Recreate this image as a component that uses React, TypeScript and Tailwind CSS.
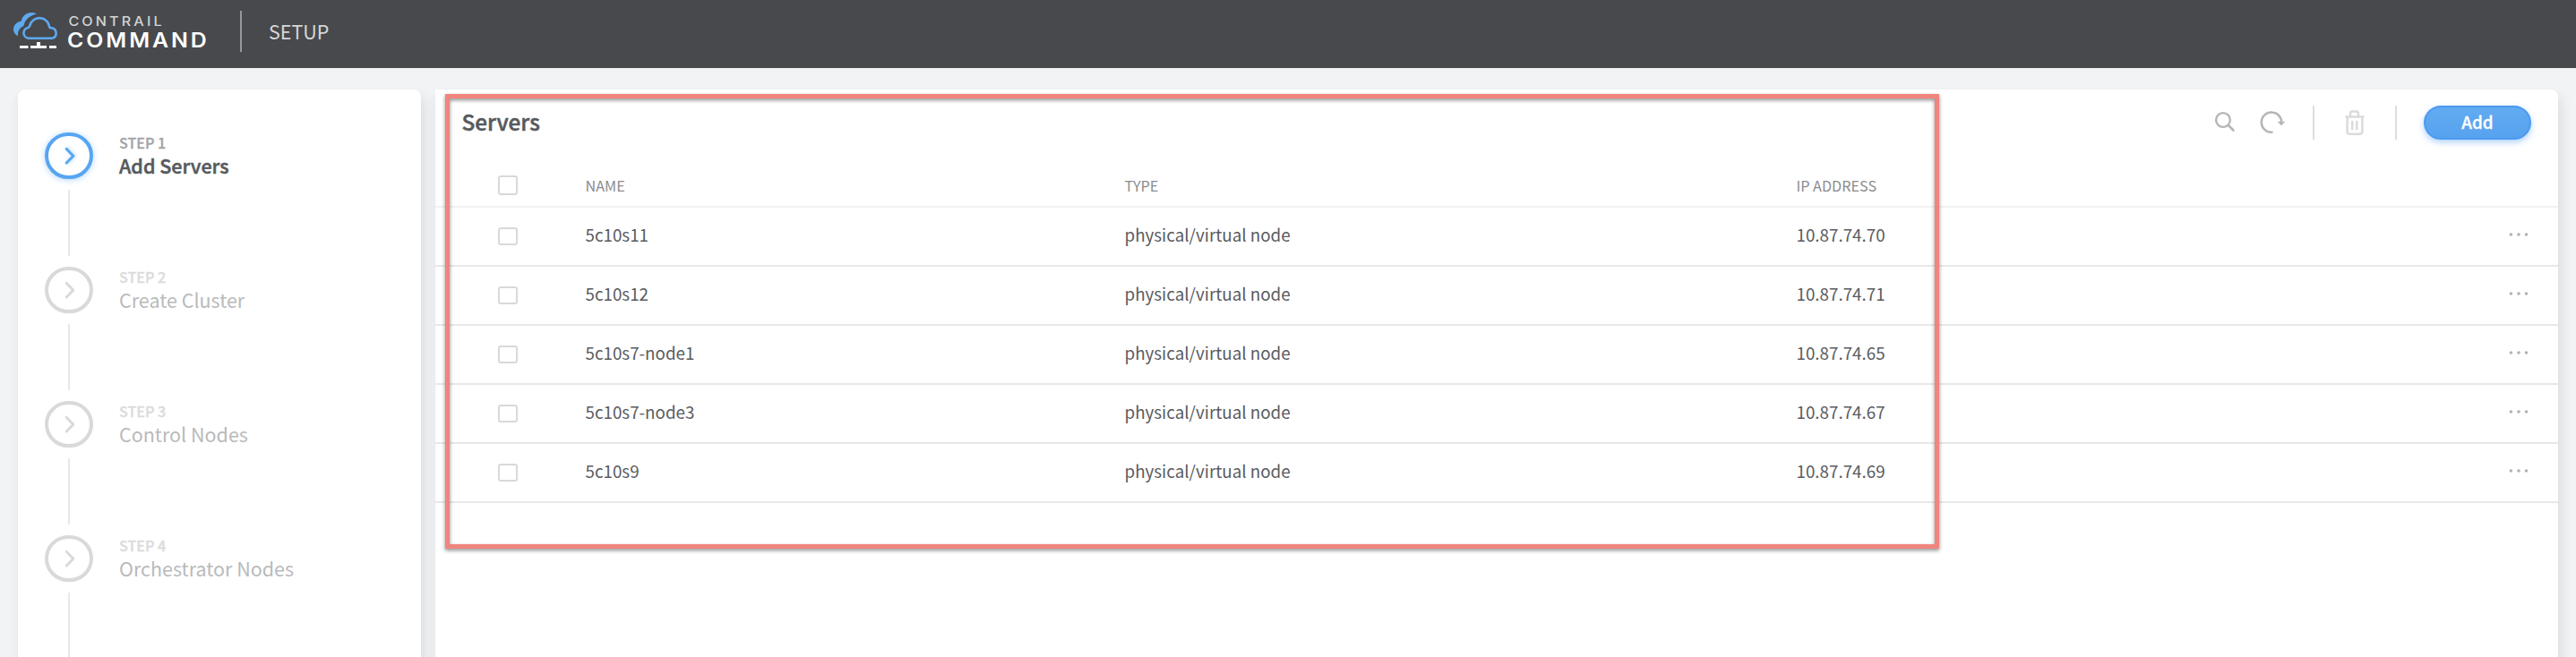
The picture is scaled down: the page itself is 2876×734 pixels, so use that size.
type Step = { label: string; title: string; active?: boolean };
type Server = { name: string; type: string; ip: string };

const steps: Step[] = [
  { label: "STEP 1", title: "Add Servers", active: true },
  { label: "STEP 2", title: "Create Cluster" },
  { label: "STEP 3", title: "Control Nodes" },
  { label: "STEP 4", title: "Orchestrator Nodes" },
];

const servers: Server[] = [
  { name: "5c10s11", type: "physical/virtual node", ip: "10.87.74.70" },
  { name: "5c10s12", type: "physical/virtual node", ip: "10.87.74.71" },
  { name: "5c10s7-node1", type: "physical/virtual node", ip: "10.87.74.65" },
  { name: "5c10s7-node3", type: "physical/virtual node", ip: "10.87.74.67" },
  { name: "5c10s9", type: "physical/virtual node", ip: "10.87.74.69" },
];

const rowGrid = "grid grid-cols-[97.5px_602px_750px_1fr_auto] items-center pl-[70px]";

function Logo() {
  return (
    <svg width="236" height="76" viewBox="0 0 236 76" fill="none">
      <path
        d="M41 15.6C38 14 34 13.5 30.5 15C26.5 16.6 24.2 19.8 23.8 23.6C18.5 24.5 15 28.5 15 33C15 36 17 38.8 20 40.3C19.6 36 21.5 31 26.3 29C28 22 33 17.5 41 15.6Z"
        fill="#5fa9ee"
      />
      <path
        d="M31.5 42.7A6 6 0 0 1 31.2 30.9C32.6 30.7 33 29.8 33.3 28.6A11 11 0 0 1 54.8 28.9C55.1 30.5 56.2 31.2 57.8 31.3A5.8 5.8 0 0 1 58 42.7Z"
        stroke="#5fa9ee"
        strokeWidth="2.6"
        strokeLinejoin="round"
      />
      <path d="M22 51h9.5v3H22zM34 51h7v-4h4v4h7v3H34zM55 51h8v3h-8z" fill="#fff" />
      <g transform="scale(1.12 1)" className="font-['Inter',sans-serif]">
        <text x="68.2" y="29" fontSize="14.4" fontWeight="500" fill="#d3d4d5" textLength="93" lengthAdjust="spacing">
          CONTRAIL
        </text>
        <text x="67" y="53" fontSize="22.2" fontWeight="600" fill="#fff" textLength="139" lengthAdjust="spacing">
          COMMAND
        </text>
      </g>
    </svg>
  );
}

function Header() {
  return (
    <header className="flex h-[76px] shrink-0 items-center bg-[#47494d]">
      <Logo />
      <div className="mb-[6px] ml-8 h-[46px] w-[2px] bg-[#97989a]" />
      <span className="ml-[30px] pb-[7px] text-[21.5px] leading-[30px] text-[#d6d7d8]">SETUP</span>
    </header>
  );
}

function StepItem({ step }: { step: Step }) {
  const ring = step.active
    ? "border-[#57a5f2] text-[#57a5f2] shadow-[0_1px_7px_rgba(87,165,242,0.45)]"
    : "border-[#d9d9d9] text-[#d9d9d9]";
  return (
    <li className="flex h-[150px] shrink-0">
      <div className="flex w-[54px] flex-col items-center">
        <div className={"flex h-[52px] w-[54px] items-center justify-center rounded-[27px] border-4 " + ring}>
          <svg
            width="14"
            height="22"
            viewBox="0 0 14 22"
            fill="none"
            className={step.active ? "ml-px drop-shadow-[1px_0_2px_rgba(87,165,242,0.5)]" : "ml-px"}
          >
            <path
              d="M3.2 3.2L10.8 11.3L3.2 19"
              stroke="currentColor"
              strokeWidth="2.9"
              strokeLinecap="round"
              strokeLinejoin="round"
            />
          </svg>
        </div>
        <div className="mt-3 h-[74px] w-[2px] bg-[#e8e8e8]" />
      </div>
      <div className="ml-[29px] pt-px">
        <div
          className={
            "text-[16.1px] font-medium leading-5 [-webkit-text-stroke:0.3px_currentColor] " +
            (step.active ? "text-[#a3a4a5]" : "text-[#dbdbdb]")
          }
        >
          {step.label}
        </div>
        <div
          className={
            "whitespace-nowrap text-[21.5px] leading-[31px] " +
            (step.active ? "font-medium text-[#565a5d] [-webkit-text-stroke:0.5px_currentColor]" : "text-[#b9babb]")
          }
        >
          {step.title}
        </div>
      </div>
    </li>
  );
}

function Checkbox({ short }: { short?: boolean }) {
  return (
    <div className={"w-[22px] rounded-[3px] border-2 border-[#d9d9d9] bg-white " + (short ? "h-5" : "h-[22px]")} />
  );
}

function Toolbar() {
  return (
    <div className="flex h-[84px] items-center pb-[10px] pl-[29.5px] pr-[30px]">
      <h1 className="pb-[3px] text-[24.3px] font-medium leading-8 text-[#565a5d] [-webkit-text-stroke:0.5px_currentColor]">
        Servers
      </h1>
      <div className="ml-auto flex items-center">
        <svg width="26" height="26" viewBox="0 0 26 26" fill="none" stroke="#b5b6b7" strokeLinecap="round">
          <circle cx="11" cy="10" r="7.9" strokeWidth="2.4" />
          <path d="M17 16L22.4 21.4" strokeWidth="2.8" />
        </svg>
        <svg width="30" height="28" viewBox="0 0 30 28" fill="none" className="ml-[25px]">
          <path
            d="M14.6 24.8A11.2 11.2 0 1 1 25.2 13.4"
            stroke="#b5b6b7"
            strokeWidth="2.5"
            strokeLinecap="round"
          />
          <path d="M21.3 13.2H28.7L25 16.8Z" fill="#b5b6b7" stroke="#b5b6b7" strokeWidth="0.8" strokeLinejoin="round" />
        </svg>
        <div className="ml-[30px] h-[38px] w-[2px] bg-[#dcddde]" />
        <svg width="24" height="30" viewBox="0 0 24 30" fill="none" stroke="#dadbdc" className="ml-[33px]">
          <path
            d="M1.5 8.4H22.5M7 8V5.1Q7 2.6 9.2 2.6H13.8Q16 2.6 16 5.1V8M3.6 8.5V24.8Q3.6 27.7 6.6 27.7H17.2Q20.4 27.7 20.4 24.8V8.5"
            strokeWidth="2.5"
          />
          <path d="M9.2 14V22.2M14.3 14V22.2" strokeWidth="2.6" strokeLinecap="round" />
        </svg>
        <div className="ml-[33px] h-[38px] w-[2px] bg-[#dcddde]" />
        <button className="ml-[30px] flex h-[38px] w-[120px] items-center justify-center rounded-full border-2 border-[#4a9af2] bg-linear-to-b from-[#62abf1] to-[#57a2ef] pb-[2px] text-[18.8px] font-medium leading-6 text-white shadow-[0_3px_7px_rgba(74,154,242,0.45)] [-webkit-text-stroke:0.3px_currentColor]">
          Add
        </button>
      </div>
    </div>
  );
}

function ServerRow({ server }: { server: Server }) {
  return (
    <div className={rowGrid + " h-[66px] border-b-2 border-[#e8e8e8] pr-[32px] text-[18.8px] leading-6 text-[#5a5c5f]"}>
      <Checkbox short />
      <span className="pb-1">{server.name}</span>
      <span className="pb-1">{server.type}</span>
      <span className="pb-1">{server.ip}</span>
      <svg width="24" height="8" viewBox="0 0 24 8" fill="#b0b1b2" className="mb-1">
        <circle cx="3.4" cy="4" r="1.8" />
        <circle cx="12" cy="4" r="1.8" />
        <circle cx="20.5" cy="4" r="1.8" />
      </svg>
    </div>
  );
}

export default function App() {
  return (
    <div className="flex h-[734px] w-full flex-col overflow-hidden bg-[#f2f3f5] font-['Noto_Sans_CJK_SC',sans-serif]">
      <Header />
      <main className="flex min-h-0 flex-1 gap-4 px-5 pt-6">
        <aside className="-mb-5 w-[450px] shrink-0 rounded-lg bg-white shadow-[3px_8px_14px_rgba(40,50,60,0.12)]">
          <ul className="flex flex-col pl-[30px] pt-12">
            {steps.map((s) => (
              <StepItem key={s.label} step={s} />
            ))}
          </ul>
        </aside>
        <section className="relative -mb-5 flex-1 rounded-r-lg bg-white shadow-[3px_8px_14px_rgba(40,50,60,0.12)]">
          <Toolbar />
          <div className={rowGrid + " h-12 border-b-2 border-[#f2f2f2] text-[16.2px] leading-6 text-[#8b8c8e]"}>
            <Checkbox />
            <span>NAME</span>
            <span>TYPE</span>
            <span>IP ADDRESS</span>
          </div>
          {servers.map((s) => (
            <ServerRow key={s.name} server={s} />
          ))}
          <div className="pointer-events-none absolute left-[11px] top-[5px] h-[508px] w-[1668px] border-[5px] border-[#f0857d] drop-shadow-[0_2px_2px_rgba(0,0,0,0.45)]" />
        </section>
      </main>
    </div>
  );
}
